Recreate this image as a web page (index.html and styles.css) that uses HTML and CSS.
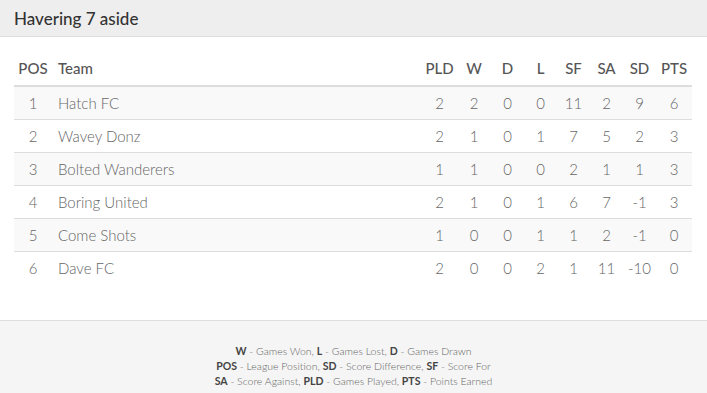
FILE: index.html
```html
<!DOCTYPE html>
<html>
<head>
<meta charset="utf-8">
<link rel="stylesheet" href="styles.css">
</head>
<body>
<div class="panel">
  <div class="panel-heading">Havering 7 aside</div>
  <div class="panel-body">
    <table class="league">
      <colgroup>
        <col class="c-pos"><col class="c-team"><col class="c-pld"><col class="c-w"><col class="c-n"><col class="c-n"><col class="c-n"><col class="c-n"><col class="c-n"><col class="c-pts">
      </colgroup>
      <thead>
        <tr><th>POS</th><th class="team">Team</th><th>PLD</th><th>W</th><th>D</th><th>L</th><th>SF</th><th>SA</th><th>SD</th><th>PTS</th></tr>
      </thead>
      <tbody>
        <tr><td>1</td><td class="team">Hatch FC</td><td>2</td><td>2</td><td>0</td><td>0</td><td>11</td><td>2</td><td>9</td><td>6</td></tr>
        <tr><td>2</td><td class="team">Wavey Donz</td><td>2</td><td>1</td><td>0</td><td>1</td><td>7</td><td>5</td><td>2</td><td>3</td></tr>
        <tr><td>3</td><td class="team">Bolted Wanderers</td><td>1</td><td>1</td><td>0</td><td>0</td><td>2</td><td>1</td><td>1</td><td>3</td></tr>
        <tr><td>4</td><td class="team">Boring United</td><td>2</td><td>1</td><td>0</td><td>1</td><td>6</td><td>7</td><td>-1</td><td>3</td></tr>
        <tr><td>5</td><td class="team">Come Shots</td><td>1</td><td>0</td><td>0</td><td>1</td><td>1</td><td>2</td><td>-1</td><td>0</td></tr>
        <tr><td>6</td><td class="team">Dave FC</td><td>2</td><td>0</td><td>0</td><td>2</td><td>1</td><td>11</td><td>-10</td><td>0</td></tr>
      </tbody>
    </table>
  </div>
  <div class="panel-footer">
    <p><b>W</b> - Games Won, <b>L</b> - Games Lost, <b>D</b> - Games Drawn</p>
    <p><b>POS</b> - League Position, <b>SD</b> - Score Difference, <b>SF</b> - Score For</p>
    <p><b>SA</b> - Score Against, <b>PLD</b> - Games Played, <b>PTS</b> - Points Earned</p>
  </div>
</div>
</body>
</html>
```
FILE: styles.css
```css
html, body {
  margin: 0;
  padding: 0;
  background: #f5f5f5;
  font-family: "Lato", "Open Sans", sans-serif;
  color: #666;
}
.panel {
  display: flex;
  flex-direction: column;
}
.panel-heading {
  background: #eeeeee;
  border-bottom: 1px solid #dcdcdc;
  height: 37px;
  box-sizing: border-box;
  padding: 8px 14px 0;
  font-size: 17px;
  font-weight: 500;
  color: #333;
  line-height: 21px;
}
.panel-body {
  background: #fff;
  padding: 15px 15px 36px 14px;
  border-bottom: 1px solid #dedede;
}
.league {
  width: 678px;
  border-collapse: collapse;
  table-layout: fixed;
  font-size: 15px;
}
.c-pos { width: 38px; }
.c-pld { width: 35px; }
.c-w { width: 34px; }
.c-n { width: 33px; }
.c-pts { width: 36px; }
.league th {
  font-weight: 500;
  color: #555;
  text-align: center;
  padding: 6px 0 7px;
  line-height: 20px;
  border-bottom: 2px solid #ddd;
}
.league td {
  text-align: center;
  padding: 6px 0;
  line-height: 20px;
  border-top: 1px solid #ddd;
  color: #666;
  font-weight: 300;
}
.league .team {
  text-align: left;
  padding-left: 6px;
}
.league tbody tr:nth-child(odd) td {
  background: #f9f9f9;
}
.league tbody tr:first-child td {
  border-top: 0;
}
.panel-footer {
  background: #f5f5f5;
  padding: 23px 0 5px;
  text-align: center;
  font-size: 10.5px;
  line-height: 15px;
  color: #666;
  font-weight: 300;
}
.panel-footer p {
  margin: 0;
}
.panel-footer b {
  font-weight: 700;
  color: #444;
}
```
